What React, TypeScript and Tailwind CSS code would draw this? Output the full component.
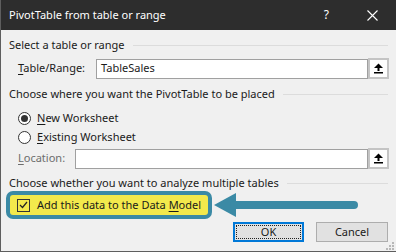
import React from "react";

const font = { fontFamily: '"Noto Sans", "Open Sans", sans-serif' };

function PickButton() {
  return (
    <div className="w-[21px] h-[21px] border-2 border-[#c4c4c4] bg-[#fdfdfd] flex items-center justify-center shrink-0">
      <svg width="11" height="11" viewBox="0 0 11 11">
        <polygon points="5.5,0.5 10,5 1,5" fill="#000" />
        <rect x="4.5" y="4.5" width="2" height="3.5" fill="#000" />
        <rect x="1" y="9" width="9" height="1.5" fill="#000" />
      </svg>
    </div>
  );
}

function Header({ text, h }: { text: string; h: string }) {
  return (
    <div className={`flex items-center pl-[8px] pr-[8px] ${h}`}>
      <span className="whitespace-nowrap">{text}</span>
      <div className="flex-1 ml-[8px] border-t border-[#dcdcdc]" />
    </div>
  );
}

function Radio({ checked, children }: { checked?: boolean; children: React.ReactNode }) {
  return (
    <div className="flex items-center h-[19px] pl-[17px]">
      <div className="w-[13px] h-[13px] rounded-full border border-[#333] bg-white flex items-center justify-center">
        {checked && <div className="w-[7px] h-[7px] rounded-full bg-[#333]" />}
      </div>
      <span className="ml-[6px]">{children}</span>
    </div>
  );
}

export default function App() {
  return (
    <div
      className="w-[396px] h-[252px] bg-[#f0f0f0] border-l border-b border-[#5e5e5e] flex flex-col text-[11px] text-[#1a1a1a] relative overflow-hidden"
      style={font}
    >
      <div className="h-[30px] bg-[#2d2d2d] flex items-center text-white shrink-0">
        <span className="pl-[8px] text-[11px] flex-1">PivotTable from table or range</span>
        <span className="text-[12px] mr-[38px]">?</span>
        <svg width="11" height="11" viewBox="0 0 11 11" className="mr-[18px]">
          <path d="M0.5 0.5 L10.5 10.5 M10.5 0.5 L0.5 10.5" stroke="#fff" strokeWidth="1.1" />
        </svg>
      </div>

      <div className="mt-[7px]">
        <Header text="Select a table or range" h="h-[16px]" />
      </div>
      <div className="mt-[5px] flex items-center h-[21px] pl-[17px] pr-[7px]">
        <span className="w-[78px]">
          <u className="underline-offset-2">T</u>able/Range:
        </span>
        <div className="flex-1 h-[20px] border border-[#a0a0a0] bg-white flex items-center pl-[4px]">
          TableSales
        </div>
        <PickButton />
      </div>

      <div className="mt-[7px]">
        <Header text="Choose where you want the PivotTable to be placed" h="h-[16px]" />
      </div>
      <div className="mt-[7px]">
        <Radio checked>
          <u className="underline-offset-2">N</u>ew Worksheet
        </Radio>
        <Radio>
          <u className="underline-offset-2">E</u>xisting Worksheet
        </Radio>
      </div>
      <div className="mt-[1px] flex items-center h-[21px] pl-[17px] pr-[7px]">
        <span className="w-[57px] text-[#6d6d6d]">
          <u className="underline-offset-2">L</u>ocation:
        </span>
        <div className="flex-1 h-[20px] border border-[#a0a0a0] bg-white" />
        <PickButton />
      </div>

      <div className="mt-[7px]">
        <Header text="Choose whether you want to analyze multiple tables" h="h-[15px]" />
      </div>
      <div className="pl-[5px] flex">
        <div className="w-[206px] h-[28px] rounded-[7px] bg-[#3b8aa5] p-[4px]">
          <div className="w-full h-full rounded-[3px] bg-[#f3e94c] flex items-center pl-[7px]">
            <div className="w-[13px] h-[13px] border border-[#333] flex items-center justify-center">
              <svg width="9" height="8" viewBox="0 0 9 8">
                <path d="M1 4 L3.5 6.5 L8 1" stroke="#222" strokeWidth="1.2" fill="none" />
              </svg>
            </div>
            <span className="ml-[7px] whitespace-nowrap">
              Add this data to the Data <u className="underline-offset-2">M</u>odel
            </span>
          </div>
        </div>
      </div>

      <div className="mt-[3px] flex justify-end pr-[8px] gap-[12px]">
        <div className="w-[71px] h-[20px] border-2 border-[#0078d7] bg-[#e1e1e1] p-[1px]">
          <div className="w-full h-full border border-dotted border-[#222] flex items-center justify-center">
            OK
          </div>
        </div>
        <div className="w-[72px] h-[20px] border border-[#adadad] bg-[#e1e1e1] flex items-center justify-center">
          Cancel
        </div>
      </div>

      <svg
        className="absolute left-[211px] top-[192px]"
        width="146"
        height="26"
        viewBox="0 0 146 26"
      >
        <polygon points="2,13 24,1 24,25" fill="#3b8aa5" />
        <line x1="22" y1="13" x2="142" y2="13" stroke="#3b8aa5" strokeWidth="8" strokeLinecap="round" />
      </svg>

      <svg className="absolute right-[2px] bottom-[1px]" width="9" height="9" viewBox="0 0 9 9">
        {[
          [7, 1],
          [4, 4],
          [7, 4],
          [1, 7],
          [4, 7],
          [7, 7],
        ].map(([x, y], i) => (
          <rect key={i} x={x} y={y} width="2" height="2" fill="#b8b8b8" />
        ))}
      </svg>
    </div>
  );
}
